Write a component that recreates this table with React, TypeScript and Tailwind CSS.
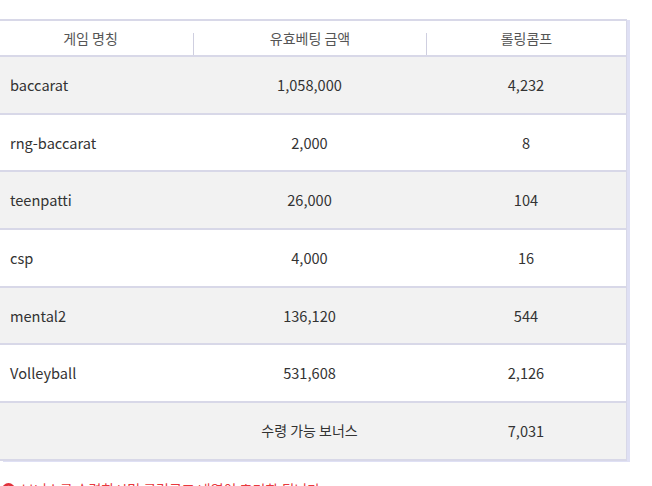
import React from "react";

const rows = [
  { name: "baccarat", bet: "1,058,000", comp: "4,232" },
  { name: "rng-baccarat", bet: "2,000", comp: "8" },
  { name: "teenpatti", bet: "26,000", comp: "104" },
  { name: "csp", bet: "4,000", comp: "16" },
  { name: "mental2", bet: "136,120", comp: "544" },
  { name: "Volleyball", bet: "531,608", comp: "2,126" },
];

export default function App() {
  return (
    <div
      className="w-[652px] h-[486px] overflow-hidden bg-white pt-[19px] text-[14px] text-[#333]"
      style={{ fontFamily: '"Noto Sans CJK KR", "Noto Sans", sans-serif' }}
    >
      <div className="w-[627px] border-t-2 border-r border-[#d8d8e8] shadow-[3px_1px_0_#dfe0f4]">
        <div className="flex h-[36px] border-b-2 border-[#d8d8e8] bg-white text-[#555]">
          <div className="w-[193px] pr-[12px] flex items-center justify-center">게임 명칭</div>
          <div className="w-px h-[22px] self-end bg-[#cfcfe0]" />
          <div className="w-[232px] flex items-center justify-center">유효베팅 금액</div>
          <div className="w-px h-[22px] self-end bg-[#cfcfe0]" />
          <div className="flex-1 flex items-center justify-center">롤링콤프</div>
        </div>
        {rows.map((r, i) => (
          <div
            key={r.name}
            className={`flex items-center h-[57.7px] border-b-2 border-[#d8d8e8] text-[14.6px] ${
              i % 2 === 0 ? "bg-[#f2f2f2]" : "bg-white"
            }`}
          >
            <div className="w-[193px] pl-[10px]">{r.name}</div>
            <div className="w-[233px] text-center">{r.bet}</div>
            <div className="flex-1 text-center">{r.comp}</div>
          </div>
        ))}
        <div className="flex items-center h-[57.7px] border-b-2 border-[#d8d8e8] bg-[#f2f2f2]">
          <div className="w-[193px]" />
          <div className="w-[233px] text-center">수령 가능 보너스</div>
          <div className="flex-1 text-center text-[14.6px]">7,031</div>
        </div>
      </div>
      <div className="mt-[18px] flex items-center gap-[6px] pl-[2px] text-[#e8383d]">
        <svg width="13" height="13" viewBox="0 0 16 16">
          <circle cx="8" cy="8" r="8" fill="#e0303a" />
          <rect x="7" y="3.5" width="2" height="6" fill="#fff" />
          <rect x="7" y="11" width="2" height="2" fill="#fff" />
        </svg>
        <span>보너스를 수령하시면 롤링콤프 내역이 초기화 됩니다.</span>
      </div>
    </div>
  );
}
